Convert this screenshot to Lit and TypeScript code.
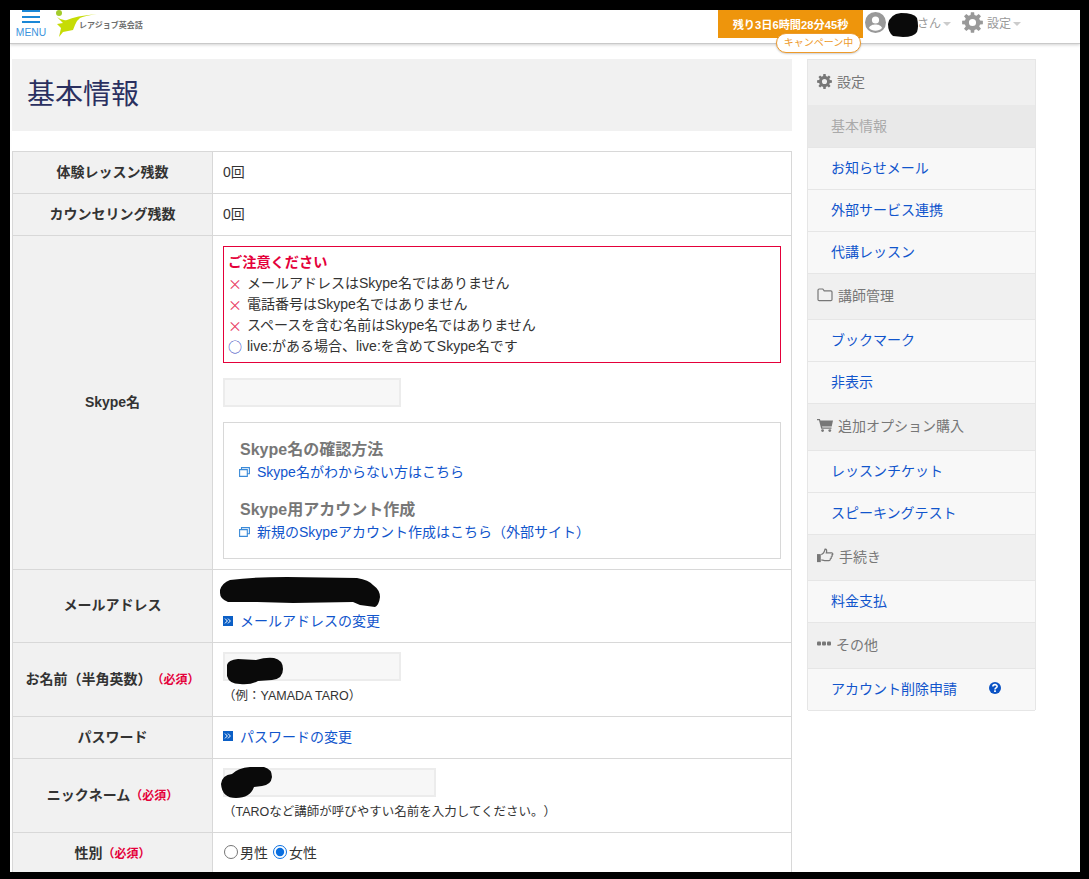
import { LitElement, html, css } from "lit";
import { customElement } from "lit/decorators.js";

function gearPath(cx: number, cy: number, ro: number, ri: number, hole: number, teeth = 8) {
  const pts: string[] = [];
  const step = (Math.PI * 2) / teeth;
  for (let i = 0; i < teeth; i++) {
    const a = i * step;
    const w = step * 0.2;
    const seq: [number, number][] = [
      [ri, a - step * 0.32],
      [ro, a - w],
      [ro, a + w],
      [ri, a + step * 0.32],
    ];
    for (const [r, t] of seq) pts.push(`${(cx + r * Math.cos(t)).toFixed(2)} ${(cy + r * Math.sin(t)).toFixed(2)}`);
  }
  const ring = `M${cx - hole} ${cy}a${hole} ${hole} 0 1 0 ${hole * 2} 0a${hole} ${hole} 0 1 0 ${-hole * 2} 0Z`;
  return `M${pts.join("L")}Z${ring}`;
}

const gear = (size: number, color: string) => html`<svg class="ic" width=${size} height=${size} viewBox="0 0 20 20"><path fill=${color} fill-rule="evenodd" d=${gearPath(10, 10, 10, 7.4, 3.4)}></path></svg>`;

const folder = html`<svg class="ic" width="16" height="14" viewBox="0 0 16 14"><path fill="none" stroke="#777" stroke-width="1.2" d="M2.2 1h3.600l1.400 1.800h6.600c.7 0 1.200.5 1.200 1.200v7.400c0 .7-.5 1.200-1.200 1.200H2.200c-.7 0-1.200-.5-1.200-1.200V2.200C1 1.500 1.500 1 2.200 1z"></path></svg>`;
const cart = html`<svg class="ic" width="16" height="14" viewBox="0 0 16 14"><path fill="#777" d="M0 1h2.900l.5 1.600H16l-1.300 5.800H5l.3 1.200h9.200v1.200H4.200L2 2.200H0z"></path><circle cx="5.600" cy="12.600" r="1.400" fill="#777"></circle><circle cx="12.800" cy="12.600" r="1.400" fill="#777"></circle></svg>`;
const thumb = html`<svg class="ic" width="17" height="15" viewBox="0 0 18 15"><path fill="#777" d="M0 6h4v8.500H0z"></path><path fill="none" stroke="#777" stroke-width="1.300" d="M4.500 6.500c2-.6 3.400-2.400 4-5.700 1.600-.3 2.200 1.300 1.400 3.800h5.600c1.500 0 1.700 2 .4 2.300.5 1-.1 2-.8 2.200.2 1-.3 1.800-1 2 .1 1-.6 1.800-1.500 1.800H8c-1.300 0-2.300-.6-3.500-.8"></path></svg>`;
const dots = html`<svg class="ic" width="14" height="5" viewBox="0 0 14 5"><g fill="#777"><rect y=".5" width="4" height="4" rx="1"></rect><rect x="5" y=".5" width="4" height="4" rx="1"></rect><rect x="10" y=".5" width="4" height="4" rx="1"></rect></g></svg>`;
const help = html`<svg class="help" width="12" height="12" viewBox="0 0 12 12"><circle cx="6" cy="6" r="6" fill="#0a52c4"></circle><path fill="none" stroke="#fff" stroke-width="1.600" d="M3.900 4.600c0-2.600 4.200-2.600 4.200-.2 0 1.500-2.100 1.500-2.100 3"></path><rect x="5.100" y="8.300" width="1.800" height="1.700" fill="#fff"></rect></svg>`;
const ext = html`<svg class="ext" width="11" height="10" viewBox="0 0 11 10"><path fill="none" stroke="#3a8ad8" stroke-width="1.100" d="M2.500 2.500V.6h7.900v6.200H8.200M.6 2.600h7.700v6.800H.6z"></path></svg>`;
const arrows = html`<svg class="arr" width="10" height="10" viewBox="0 0 10 10"><rect width="10" height="10" fill="#0b5fc6"></rect><path fill="none" stroke="#fff" stroke-width="1" d="M2 2.600 4.400 5 2 7.400M5 2.600 7.400 5 5 7.400"></path></svg>`;
const blob = (w: number, h: number, d: string, cls: string) => html`<svg class="blob ${cls}" width=${w} height=${h} viewBox="0 0 ${w} ${h}"><path d=${d} fill="#0a0a0a"></path></svg>`;

const side: [string, string, any?][] = [
  ["h", "設定", gear(15, "#777")],
  ["a", "基本情報"],
  ["i", "お知らせメール"],
  ["i", "外部サービス連携"],
  ["i", "代講レッスン"],
  ["h", "講師管理", folder],
  ["i", "ブックマーク"],
  ["i", "非表示"],
  ["h", "追加オプション購入", cart],
  ["i", "レッスンチケット"],
  ["i", "スピーキングテスト"],
  ["h", "手続き", thumb],
  ["i", "料金支払"],
  ["h", "その他", dots],
  ["q", "アカウント削除申請"],
];

@customElement("app-root")
export class AppRoot extends LitElement {
  static styles = css`
    :host { display: block; font-family: "Liberation Sans", "Noto Sans CJK JP", sans-serif; font-size: 14px; color: #333; text-spacing-trim: space-all; }
    * { box-sizing: border-box; }
    .frame { height: 879px; border: solid #000; border-width: 10px 9px 7px 10px; background: #fff; overflow: hidden; position: relative; }
    .top { height: 34px; position: relative; border-bottom: 1px solid #c9c9c9; box-shadow: 0 1px 3px rgba(0,0,0,.18); display: flex; align-items: flex-start; background: #fff; }
    .menu { width: 42px; display: flex; flex-direction: column; align-items: center; font-size: 10.3px; color: #3a93dd; line-height: 11px; flex: none; }
    .bars { width: 18px; height: 13px; margin: 0 0 4px; border-bottom: 2px solid #1a87d6; border-top: 2px solid #1a87d6; position: relative; }
    .bars::after { content: ""; position: absolute; left: 0; right: 0; top: 3.5px; height: 2px; background: #1a87d6; }
    .logo { position: relative; margin-left: -4px; width: 110px; height: 28px; flex: none; }
    .logo svg { display: block; }
    .logotxt { position: absolute; left: 31px; top: 10px; font-size: 8px; font-weight: 700; color: #6f6f6f; white-space: nowrap; line-height: 11px; }
    .spacer { flex: 1; }
    .timer { position: relative; width: 145px; height: 28px; background: #ee950c; color: #fff; font-size: 11.2px; font-weight: 700; display: flex; align-items: center; justify-content: center; white-space: nowrap; flex: none; }
    .pill { position: absolute; left: 58px; top: 23px; width: 85px; height: 20px; border: 1px solid #ee9a2a; border-radius: 10px; background: #fff; color: #ee9a2a; font-size: 10px; font-weight: 400; line-height: 18px; text-align: center; box-shadow: 0 1px 2px rgba(0,0,0,.2); }
    .user { display: flex; align-items: center; flex: none; color: #999; font-size: 12px; height: 25px; width: 217px; padding-left: 2px; }
    .ic { flex: none; display: block; }
    .name { margin-left: 31px; }
    .caret { width: 0; height: 0; border: 4px solid transparent; border-top-color: #ccc; border-bottom: 0; margin-left: 2px; margin-top: 2px; }
    .gearT { margin-left: 11px; margin-right: 4px; }
    .blob { position: absolute; pointer-events: none; }
    .b1 { left: 877px; top: 2px; }
    .b2 { left: 209px; top: 565px; }
    .b3 { left: 216px; top: 647px; }
    .b4 { left: 210px; top: 756px; }

    .wrap { display: flex; align-items: flex-start; padding: 15px 0 0 2px; gap: 15px; }
    .main { width: 780px; flex: none; }
    .title { height: 72px; background: #f1f1f1; padding: 0 15px 6px; display: flex; align-items: center; font-size: 28px; font-weight: 400; color: #2a3060; margin: 0 0 20px; }
    table { border-collapse: collapse; width: 780px; table-layout: fixed; }
    th, td { border: 1px solid #d8d8d8; font-weight: 400; padding: 0 10px 4px; }
    tr { height: 42px; }
    th { width: 200px; background: #f1f1f1; font-weight: 700; color: #333; text-align: center; padding: 0 0 4px; }
    .rq { color: #e4003a; font-size: 12px; font-weight: 700; }
    a { color: #1155cc; text-decoration: none; }
    .skype { vertical-align: top; padding: 10px 10px 0; }
    .notice { border: 1px solid #e4003a; height: 117px; padding: 6px 4px; line-height: 21px; margin-bottom: 15px; }
    .nt { color: #e4003a; font-weight: 700; font-size: 14.2px; line-height: 19px; margin-bottom: 1px; }
    .nl { display: flex; }
    .sym { width: 19px; flex: none; color: #e8405f; font-family: "Noto Sans CJK JP", sans-serif; }
    .circ { color: #3a49c0; }
    .inp { display: block; height: 29px; width: 178px; background: #f7f7f7; border: 2px solid #ececec; }
    .wide { width: 213px; }
    .info { border: 1px solid #d8d8d8; height: 137px; margin: 15px 0 10px; padding: 15px 16px 0; }
    .ih { font-size: 16px; font-weight: 700; color: #777; line-height: 24px; }
    .il { display: flex; align-items: center; line-height: 22px; margin: -1px 0 15px -1px; }
    .ext { margin-right: 7px; flex: none; }
    .arr { margin-right: 7px; flex: none; }
    .mail { padding-top: 41px; padding-bottom: 11px; line-height: 20px; }
    .form { padding-bottom: 2px; }
    .lk { display: flex; align-items: center; }
    .note { font-size: 12.5px; line-height: 20px; margin-top: 5px; }
    .rad { display: flex; align-items: center; }
    .rad input { margin: 0 2px 0 1px; width: 14px; height: 14px; accent-color: #0a6fe0; }
    .rad label { display: flex; align-items: center; margin-right: 4px; }

    .side { width: 229px; flex: none; border: 1px solid #e6e6e6; border-top: 0; border-bottom: 0; }
    .sh { height: 47.2px; margin-bottom: -1px; background: #f0f0f0; border-top: 1px solid #e6e6e6; border-bottom: 1px solid #e6e6e6; color: #777; display: flex; align-items: center; padding: 0 0 3px 9px; gap: 5px; }
    .si { height: 43px; margin-bottom: -1px; background: #f8f8f8; border: solid #e6e6e6; border-width: 1px 0; display: flex; align-items: center; padding: 0 0 3px 23px; }
    .si.act { background: #e9e9e9; color: #aaa; border-color: #e9e9e9; }
    .help { margin-left: 32px; }
  `;

  render() {
    return html`<div class="frame">
      <header class="top">
        <div class="menu"><div class="bars"></div>MENU</div>
        <div class="logo">
          <svg width="50" height="28" viewBox="0 0 50 28"><circle cx="11" cy="3" r="3" fill="#a3cb2b"></circle><path fill="#c6dc05" d="M9 7Q14 11 19 10Q27 6 49 4Q36 6 32 8Q28 11 27 15L25 20L15 22L11 27L13 18L9 14L15 13Z"></path></svg>
          <div class="logotxt">レアジョブ英会話</div>
        </div>
        <div class="spacer"></div>
        <div class="timer">残り3日6時間28分45秒<div class="pill">キャンペーン中</div></div>
        <div class="user">
          <svg class="ic" width="21" height="21" viewBox="0 0 21 21"><circle cx="10.5" cy="10.5" r="10.5" fill="#999"></circle><circle cx="10.5" cy="8" r="3.6" fill="#fff"></circle><path fill="#fff" d="M4 16c1-3 4-3.6 6.5-3.6S16 13 17 16c-1.6 1.800-4 2.800-6.500 2.800S5.600 17.800 4 16z"></path></svg>
          <span class="name">さん</span><span class="caret"></span>
          <span class="gearT">${gear(21, "#999")}</span>設定<span class="caret"></span>
        </div>
      </header>
      ${blob(33, 26, "M1 12Q3 2 14 1Q27 1 30 6Q32 14 30 20Q27 25 16 25L6 24Q1 20 1 12Z", "b1")}
      <div class="wrap">
        <div class="main">
          <h1 class="title">基本情報</h1>
          <table>
            <tr><th>体験レッスン残数</th><td>0回</td></tr>
            <tr><th>カウンセリング残数</th><td>0回</td></tr>
            <tr style="height:334px"><th>Skype名</th><td class="skype">
              <div class="notice">
                <div class="nt">ご注意ください</div>
                <div class="nl"><span class="sym">×</span>メールアドレスはSkype名ではありません</div>
                <div class="nl"><span class="sym">×</span>電話番号はSkype名ではありません</div>
                <div class="nl"><span class="sym">×</span>スペースを含む名前はSkype名ではありません</div>
                <div class="nl"><span class="sym circ">○</span>live:がある場合、live:を含めてSkype名です</div>
              </div>
              <div class="inp"></div>
              <div class="info">
                <div class="ih">Skype名の確認方法</div>
                <div class="il">${ext}<a href="#">Skype名がわからない方はこちら</a></div>
                <div class="ih">Skype用アカウント作成</div>
                <div class="il">${ext}<a href="#">新規のSkypeアカウント作成はこちら（外部サイト）</a></div>
              </div>
            </td></tr>
            <tr style="height:73px"><th>メールアドレス</th><td class="mail"><div class="lk">${arrows}<a href="#">メールアドレスの変更</a></div></td></tr>
            <tr style="height:74px"><th>お名前（半角英数）<span class="rq">（必須）</span></th><td class="form"><div class="inp"></div><div class="note">（例：YAMADA TARO）</div></td></tr>
            <tr><th>パスワード</th><td><div class="lk">${arrows}<a href="#">パスワードの変更</a></div></td></tr>
            <tr style="height:74px"><th>ニックネーム<span class="rq">（必須）</span></th><td class="form"><div class="inp wide"></div><div class="note">（TAROなど講師が呼びやすい名前を入力してください。）</div></td></tr>
            <tr><th>性別<span class="rq">（必須）</span></th><td><div class="rad"><label><input type="radio" name="g" />男性</label><label><input type="radio" name="g" checked />女性</label></div></td></tr>
          </table>
        </div>
        <nav class="side">
          ${side.map(([k, t, ic]) => k === "h"
            ? html`<div class="sh">${ic}<span>${t}</span></div>`
            : k === "a"
              ? html`<div class="si act">${t}</div>`
              : html`<div class="si"><a href="#">${t}</a>${k === "q" ? help : ""}</div>`)}
        </nav>
      </div>
      ${blob(163, 34, "M1 15Q3 8 11 5Q35 2 68 2L138 3Q150 5 154 10Q161 15 161 22Q160 30 156 32L141 30L134 27L74 28L38 27L9 27Q1 24 1 18Z", "b2")}
      ${blob(58, 28, "M1 8Q2 3 12 2L30 3Q40 0 48 1Q57 3 57 12Q57 22 46 23L32 24Q25 28 14 27Q3 27 1 19Z", "b3")}
      ${blob(53, 33, "M1 18Q2 9 12 8Q18 2 30 1L44 1Q52 3 52 11Q51 19 42 20L34 21Q30 32 16 32Q2 32 1 18Z", "b4")}
    </div>`;
  }
}
